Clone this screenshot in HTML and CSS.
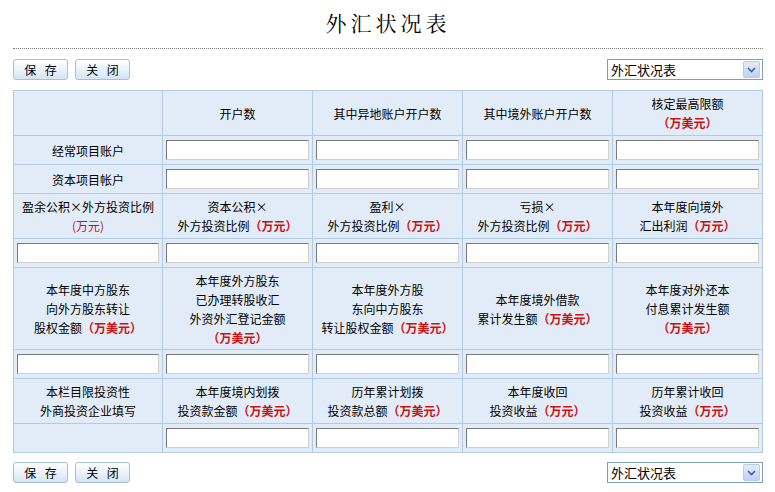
FILE: index.html
```html
<!DOCTYPE html>
<html lang="zh-CN">
<head>
  <meta charset="UTF-8" />
  <title>外汇状况表</title>
  <link rel="stylesheet" href="styles.css">
</head>
<body>
  <div class="page">
    <h1 class="title">外汇状况表</h1>

    <div class="toolbar">
      <div class="buttons">
        <button class="btn">保 存</button>
        <button class="btn">关 闭</button>
      </div>
      <div class="select">
        <span class="select-text">外汇状况表</span>
        <span class="select-arrow">
          <svg width="9" height="6" viewBox="0 0 9 6"><path d="M1 1 L4.5 4.5 L8 1" fill="none" stroke="#4d6185" stroke-width="1.6"/></svg>
        </span>
      </div>
    </div>

    <table class="form-table">
      <colgroup>
        <col class="col-first">
        <col><col><col><col>
      </colgroup>
      <tr class="head">
        <td></td>
        <td>开户数</td>
        <td>其中异地账户开户数</td>
        <td>其中境外账户开户数</td>
        <td>核定最高限额<br><span class="unit">（万美元）</span></td>
      </tr>
      <tr class="inputs">
        <td>经常项目账户</td>
        <td><input type="text"></td>
        <td><input type="text"></td>
        <td><input type="text"></td>
        <td><input type="text"></td>
      </tr>
      <tr class="inputs">
        <td>资本项目帐户</td>
        <td><input type="text"></td>
        <td><input type="text"></td>
        <td><input type="text"></td>
        <td><input type="text"></td>
      </tr>
      <tr class="head">
        <td>盈余公积×外方投资比例<br><span class="unit thin">(万元)</span></td>
        <td>资本公积×<br>外方投资比例<span class="unit">（万元）</span></td>
        <td>盈利×<br>外方投资比例<span class="unit">（万元）</span></td>
        <td>亏损×<br>外方投资比例<span class="unit">（万元）</span></td>
        <td>本年度向境外<br>汇出利润<span class="unit">（万元）</span></td>
      </tr>
      <tr class="inputs">
        <td><input type="text"></td>
        <td><input type="text"></td>
        <td><input type="text"></td>
        <td><input type="text"></td>
        <td><input type="text"></td>
      </tr>
      <tr class="head tall">
        <td>本年度中方股东<br>向外方股东转让<br>股权金额<span class="unit">（万美元）</span></td>
        <td>本年度外方股东<br>已办理转股收汇<br>外资外汇登记金额<br><span class="unit">（万美元）</span></td>
        <td>本年度外方股<br>东向中方股东<br>转让股权金额<span class="unit">（万美元）</span></td>
        <td>本年度境外借款<br>累计发生额<span class="unit">（万美元）</span></td>
        <td>本年度对外还本<br>付息累计发生额<br><span class="unit">（万美元）</span></td>
      </tr>
      <tr class="inputs">
        <td><input type="text"></td>
        <td><input type="text"></td>
        <td><input type="text"></td>
        <td><input type="text"></td>
        <td><input type="text"></td>
      </tr>
      <tr class="head">
        <td>本栏目限投资性<br>外商投资企业填写</td>
        <td>本年度境内划拨<br>投资款金额<span class="unit">（万美元）</span></td>
        <td>历年累计划拨<br>投资款总额<span class="unit">（万美元）</span></td>
        <td>本年度收回<br>投资收益<span class="unit">（万元）</span></td>
        <td>历年累计收回<br>投资收益<span class="unit">（万元）</span></td>
      </tr>
      <tr class="inputs">
        <td></td>
        <td><input type="text"></td>
        <td><input type="text"></td>
        <td><input type="text"></td>
        <td><input type="text"></td>
      </tr>
    </table>

    <div class="toolbar bottom">
      <div class="buttons">
        <button class="btn">保 存</button>
        <button class="btn">关 闭</button>
      </div>
      <div class="select">
        <span class="select-text">外汇状况表</span>
        <span class="select-arrow">
          <svg width="9" height="6" viewBox="0 0 9 6"><path d="M1 1 L4.5 4.5 L8 1" fill="none" stroke="#4d6185" stroke-width="1.6"/></svg>
        </span>
      </div>
    </div>
  </div>
</body>
</html>
```

FILE: styles.css
```css
body {
  margin: 0;
  background: #fff;
  color: #000;
  font-family: "Noto Sans CJK SC", "Liberation Sans", sans-serif;
  font-size: 12px;
}

.page {
  width: 750px;
  margin-left: 13px;
}

/* title with dotted rule under it */
.title {
  margin: 0;
  height: 48px;
  line-height: 44px;
  text-align: center;
  font-family: "Noto Serif CJK SC", "Noto Sans CJK SC", serif;
  font-size: 21px;
  font-weight: normal;
  letter-spacing: 4px;
  border-bottom: 1px dotted #7a7a7a;
}

.toolbar {
  display: flex;
  justify-content: space-between;
  align-items: center;
  margin-top: 10px;
  margin-bottom: 10px;
}
.toolbar.bottom {
  margin-top: 9px;
}

.buttons {
  display: flex;
  gap: 7px;
}

.btn {
  width: 55px;
  height: 21px;
  padding: 0;
  border: 1px solid #a7bfd8;
  border-radius: 3px;
  background: linear-gradient(#ffffff, #e9f1fa 55%, #d5e4f4);
  font-family: "Noto Sans CJK SC", sans-serif;
  font-size: 12px;
  letter-spacing: 3px;
  text-indent: 3px;
  color: #000;
  cursor: pointer;
}

.select {
  width: 154px;
  height: 19px;
  border: 1px solid #7f9db9;
  display: flex;
  align-items: center;
  justify-content: space-between;
  background: #fff;
}
.select-text {
  padding-left: 3px;
  font-size: 13px;
}
.select-arrow {
  width: 15px;
  height: 15px;
  margin-right: 2px;
  border: 1px solid #b7cbee;
  border-radius: 2px;
  background: linear-gradient(#e3ecfd, #bfd1f5);
  display: flex;
  align-items: center;
  justify-content: center;
}

/* main form grid */
.form-table {
  width: 750px;
  border-collapse: collapse;
  table-layout: fixed;
  background: #e2ecf8;
}
.form-table .col-first {
  width: 149px;
}
.form-table td {
  border: 1px solid #b2cbe4;
  text-align: center;
  vertical-align: middle;
  padding: 0 3px;
  line-height: 19px;
}
.form-table .head td {
  height: 44px;
}
.form-table .head.tall td {
  height: 81px;
}
.form-table .inputs td {
  height: 28px;
}

.unit {
  color: #cc1111;
  font-weight: bold;
}
.unit.thin {
  font-weight: normal;
}

.form-table input {
  display: block;
  width: 100%;
  height: 20px;
  box-sizing: border-box;
  margin: 0;
  border: 1px solid;
  border-color: #7a7a7a #d4d0c8 #d4d0c8 #7a7a7a;
  background: #fff;
}
```
